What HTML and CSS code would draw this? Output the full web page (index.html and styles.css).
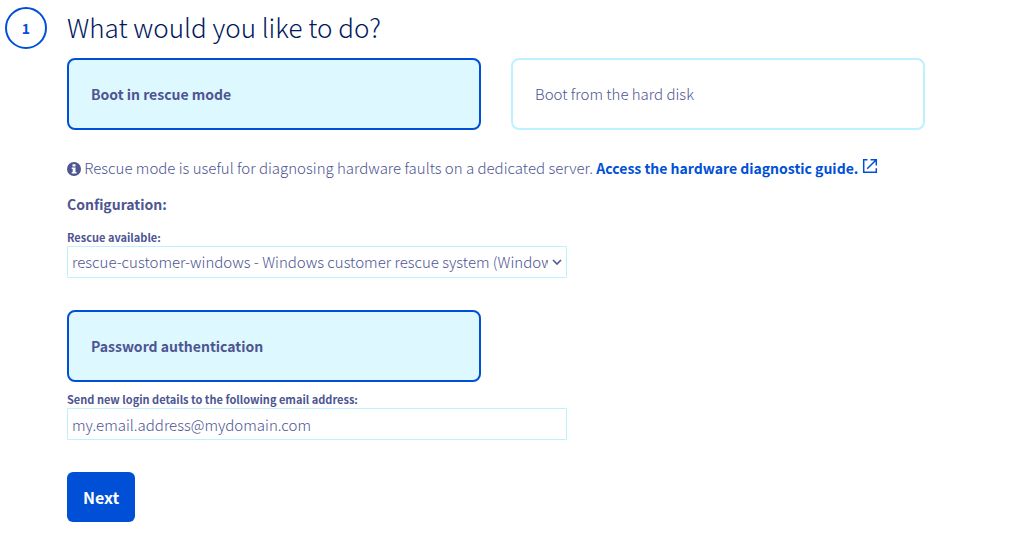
FILE: index.html
```html
<!DOCTYPE html>
<html lang="en">
<head>
<meta charset="utf-8">
<meta name="viewport" content="width=device-width, initial-scale=1">
<title>Boot mode</title>
<link rel="stylesheet" href="styles.css">
</head>
<body>
<form class="step">
  <span class="step-number">1</span>
  <div class="step-content">
    <h1 class="step-title">What would you like to do?</h1>
    <div class="cards">
      <label class="card"><input class="card-input" type="radio" name="boot" checked><span>Boot in rescue mode</span></label>
      <label class="card"><input class="card-input" type="radio" name="boot"><span>Boot from the hard disk</span></label>
    </div>
    <p class="hint">
      <svg class="info-icon" viewBox="0 0 14 14" aria-hidden="true"><circle cx="7" cy="7" r="7" fill="currentColor"/><path d="M5.5 2.2h3v2.2h-3zM4.7 5.4h3.8v4.5h1v1.7H4.7V9.9h1V7.1h-1z" fill="#fff"/></svg>
      Rescue mode is useful for diagnosing hardware faults on a dedicated server.
      <a class="guide-link" href="#guide">Access the hardware diagnostic guide.
      <svg class="external-icon" viewBox="0 0 16 16" aria-hidden="true"><path d="M5.5 1.7H1.7v12.6h12.6v-4M8.5 1.7h5.8v5.8M14.3 1.7 5.2 10.8" fill="none" stroke="currentColor" stroke-width="1.5"/></svg></a>
    </p>
    <h2 class="section-title">Configuration:</h2>
    <div class="field">
      <label class="field-label" for="rescue">Rescue available:</label>
      <select class="control" id="rescue"><option>rescue-customer-windows - Windows customer rescue system (Windows)</option></select>
    </div>
    <div class="cards auth">
      <label class="card"><input class="card-input" type="radio" name="auth" checked><span>Password authentication</span></label>
    </div>
    <div class="field">
      <label class="field-label" for="email">Send new login details to the following email address:</label>
      <input class="control" id="email" type="email" value="my.email.address@mydomain.com">
    </div>
    <button class="next" type="button">Next</button>
  </div>
</form>
</body>
</html>
```
FILE: styles.css
```css
* {
  box-sizing: border-box;
}

body {
  margin: 0;
  background: #fff;
  color: #4d5592;
  font: 300 15px/20px "Noto Sans CJK SC", "Open Sans", sans-serif;
}

.step {
  display: flex;
  gap: 20px;
  padding: 7px 95px 12px 5px;
}

.step-number {
  display: flex;
  flex: none;
  align-items: center;
  justify-content: center;
  width: 42px;
  height: 42px;
  border: 2px solid #0050d7;
  border-radius: 50%;
  color: #0050d7;
  font-weight: 700;
  font-size: 14px;
}

.step-content {
  flex: 1;
  min-width: 0;
}

.step-title {
  margin: 0 0 11px;
  color: #00185e;
  font-weight: 300;
  font-size: 26px;
  line-height: 40px;
}

.cards {
  display: grid;
  grid-template-columns: 1fr 1fr;
  gap: 30px;
}

.card {
  display: flex;
  align-items: center;
  min-height: 72px;
  padding: 16px 22px;
  border: 2px solid #bef1ff;
  border-radius: 8px;
  cursor: pointer;
}

.card:has(:checked) {
  border-color: #0050d7;
  background: #def8ff;
  font-weight: 700;
  font-size: 14px;
}

.card-input {
  position: absolute;
  opacity: 0;
}

.hint {
  margin: 28px 0 16px;
}

.info-icon {
  width: 14px;
  height: 14px;
  vertical-align: -2px;
}

.external-icon {
  width: 16px;
  height: 16px;
  vertical-align: 0;
}

.guide-link {
  color: #0050d7;
  font-weight: 700;
  font-size: 14px;
  text-decoration: none;
}

.section-title {
  margin: 0 0 15px;
  font-weight: 700;
  font-size: 14px;
  line-height: 20px;
}

.field-label {
  display: block;
  padding-bottom: 1px;
  font-weight: 700;
  font-size: 11px;
  line-height: 16px;
}

.control {
  display: block;
  width: 500px;
  max-width: 100%;
  height: 32px;
  padding: 0 4px;
  border: 1px solid #bef1ff;
  border-radius: 1px;
  background: #fff;
  color: inherit;
  font: inherit;
}

select.control {
  padding-right: 18px;
  appearance: none;
  background: #fff url("data:image/svg+xml,%3Csvg xmlns='http://www.w3.org/2000/svg' width='10' height='6'%3E%3Cpath d='M1 1l4 4 4-4' fill='none' stroke='%234d5592' stroke-width='1.6'/%3E%3C/svg%3E") no-repeat right 4px center;
}

.auth {
  margin: 32px 0 9px;
}

.next {
  margin-top: 32px;
  padding: 15px 16px;
  border: 0;
  border-radius: 6px;
  background: #0050d7;
  color: #fff;
  font: 700 16px/20px "Noto Sans CJK SC", "Open Sans", sans-serif;
}
```
